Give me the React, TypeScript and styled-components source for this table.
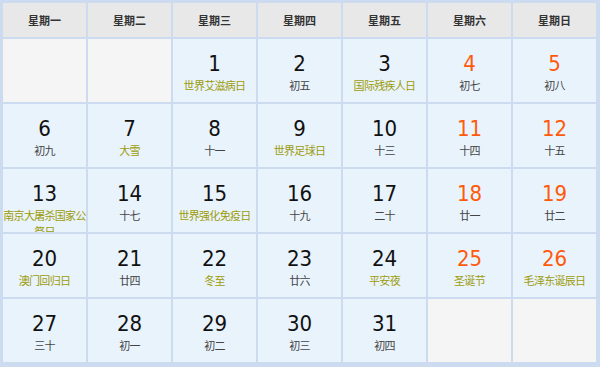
import React from 'react';
import styled, { createGlobalStyle } from 'styled-components';

interface Day {
  day: number;
  note: string;
  festival?: boolean;
}

const GlobalStyle = createGlobalStyle`
  html, body {
    margin: 0;
    padding: 0;
    background: #fff;
  }
`

const Calendar = styled.div`
  width: 600px;
  height: 367px;
  box-sizing: border-box;
  padding: 3px 4px 5px 3px;
  background: #cddbf0;
  display: grid;
  grid-template-columns: repeat(7, 83px);
  grid-template-rows: 34px repeat(5, 63px);
  gap: 2px;
  font-family: "DejaVu Sans", "Noto Sans CJK SC", sans-serif;
`

const HeadCell = styled.div`
  background: #e8e8e8;
  display: flex;
  align-items: center;
  justify-content: center;
  font-family: "Noto Sans CJK SC", sans-serif;
  font-size: 11px;
  font-weight: 700;
  color: #333;
`

const Cell = styled.div<{ $empty?: boolean }>`
  background: ${p => (p.$empty ? '#f5f5f5' : '#e9f3fc')};
  overflow: hidden;
  padding-top: 12px;
  box-sizing: border-box;
  text-align: center;
`

const Num = styled.div<{ $weekend?: boolean }>`
  font-family: "DejaVu Sans Condensed", "DejaVu Sans", sans-serif;
  font-size: 22px;
  line-height: 26px;
  color: ${p => (p.$weekend ? '#ff5a0a' : '#111')};
`

const Note = styled.div<{ $festival?: boolean }>`
  font-family: "Noto Sans CJK SC", sans-serif;
  font-size: 11px;
  line-height: 16px;
  letter-spacing: -0.7px;
  color: ${p => (p.$festival ? '#9c9c0a' : '#444')};
`

const heads = ['星期一', '星期二', '星期三', '星期四', '星期五', '星期六', '星期日'];

const f = (day: number, note: string): Day => ({ day, note, festival: true });
const l = (day: number, note: string): Day => ({ day, note });

const cells: (Day | null)[] = [
  null, null, f(1, '世界艾滋病日'), l(2, '初五'), f(3, '国际残疾人日'), l(4, '初七'), l(5, '初八'),
  l(6, '初九'), f(7, '大雪'), l(8, '十一'), f(9, '世界足球日'), l(10, '十三'), l(11, '十四'), l(12, '十五'),
  f(13, '南京大屠杀国家公祭日'), l(14, '十七'), f(15, '世界强化免疫日'), l(16, '十九'), l(17, '二十'), l(18, '廿一'), l(19, '廿二'),
  f(20, '澳门回归日'), l(21, '廿四'), f(22, '冬至'), l(23, '廿六'), f(24, '平安夜'), f(25, '圣诞节'), f(26, '毛泽东诞辰日'),
  l(27, '三十'), l(28, '初一'), l(29, '初二'), l(30, '初三'), l(31, '初四'), null, null,
];

export default function App() {
  return (
    <>
      <GlobalStyle />
      <Calendar>
        {heads.map(h => <HeadCell key={h}>{h}</HeadCell>)}
        {cells.map((c, i) =>
          c ? (
            <Cell key={i}>
              <Num $weekend={i % 7 >= 5}>{c.day}</Num>
              <Note $festival={c.festival}>{c.note}</Note>
            </Cell>
          ) : (
            <Cell key={i} $empty />
          )
        )}
      </Calendar>
    </>
  );
}
